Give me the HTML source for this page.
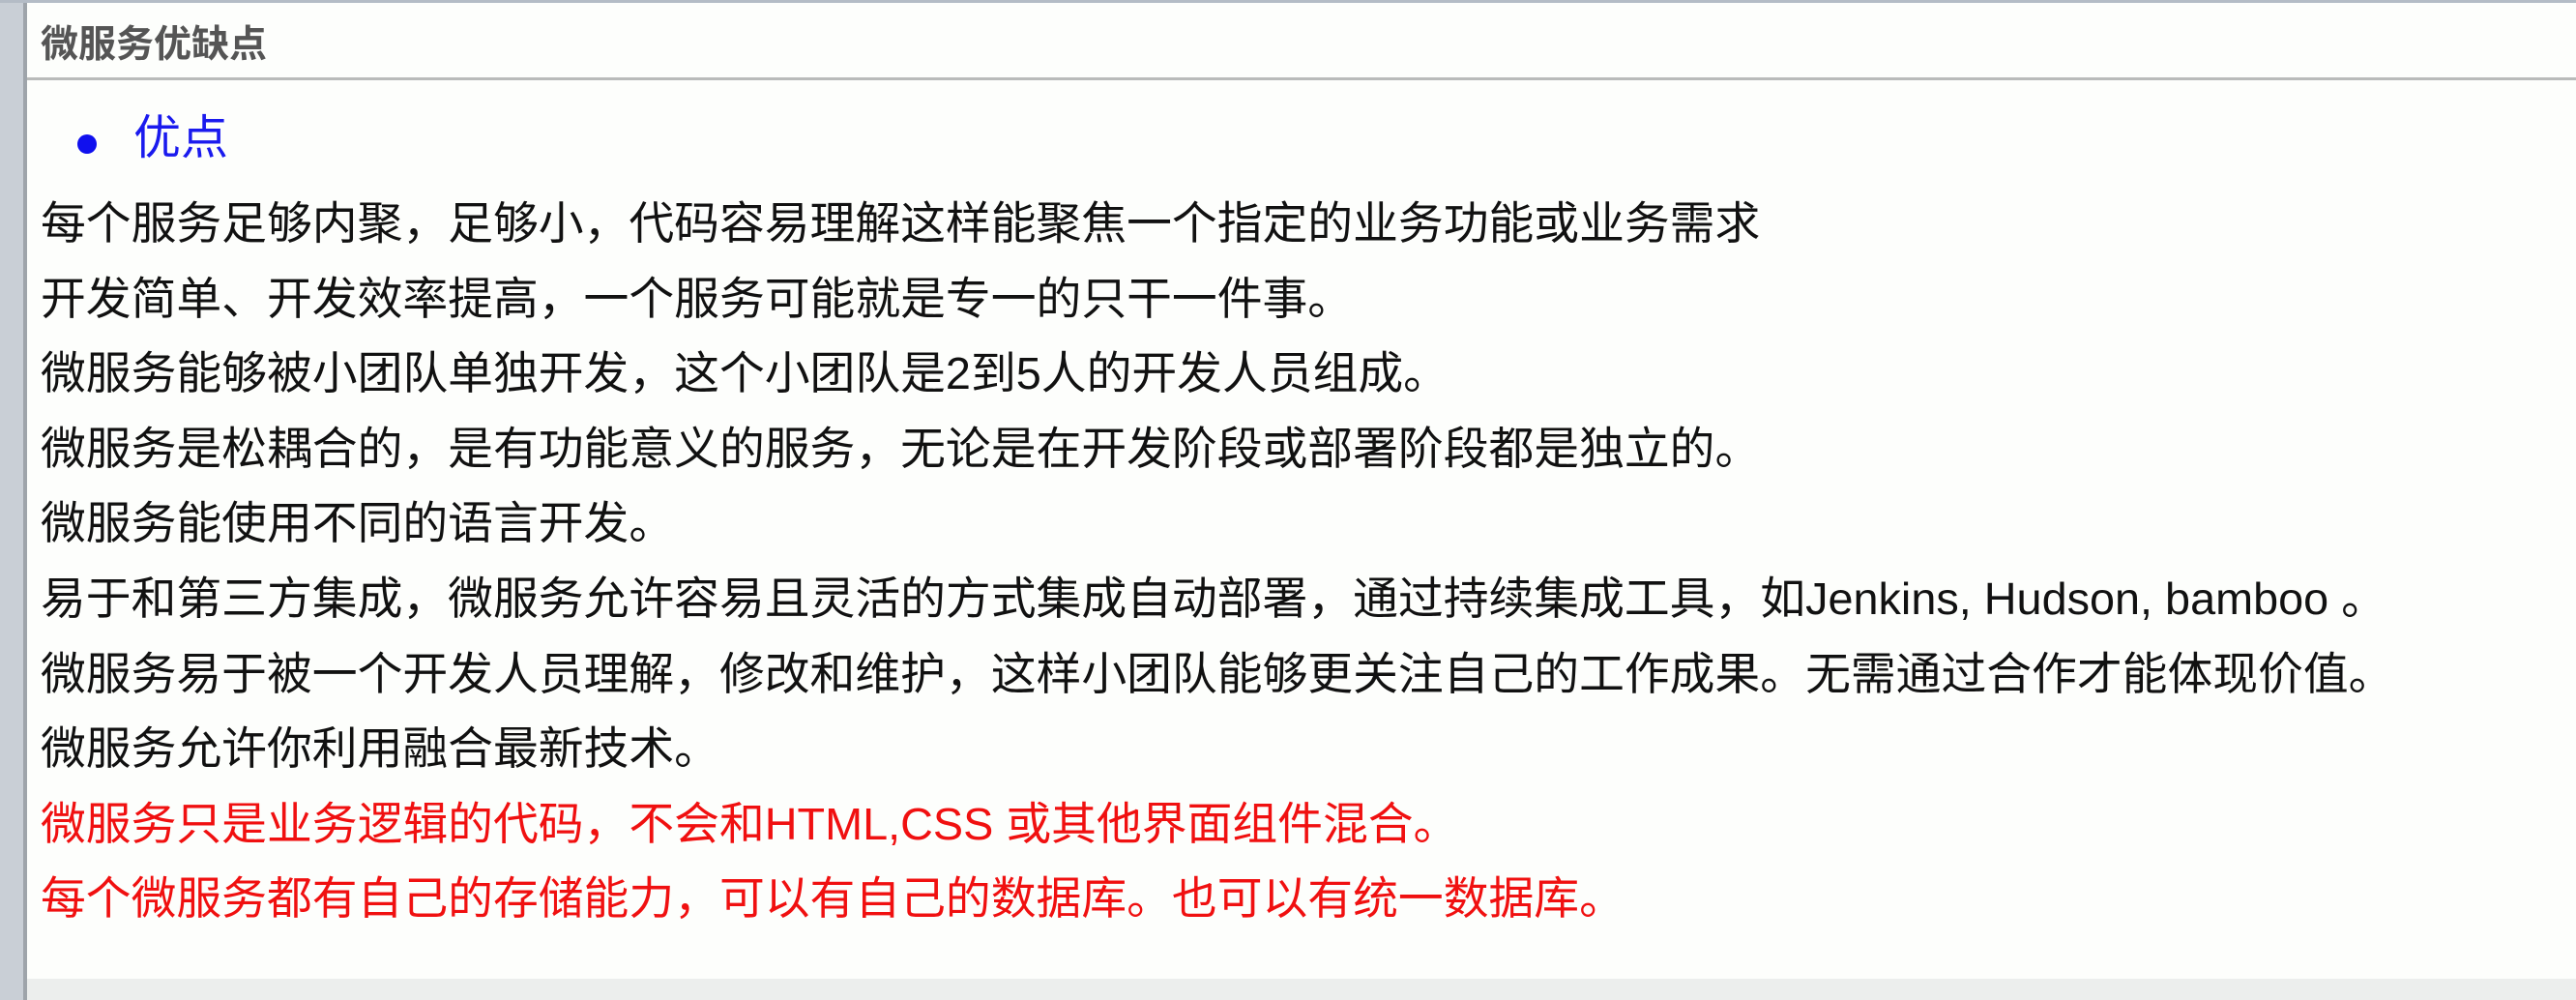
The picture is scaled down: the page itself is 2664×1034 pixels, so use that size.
<!DOCTYPE html>
<html><head><meta charset="utf-8"><style>
html,body{margin:0;padding:0;}
body{width:2664px;height:1034px;position:relative;overflow:hidden;background:#fdfefc;font-family:"Liberation Sans","Noto Sans CJK SC",sans-serif;}
.lb{position:absolute;left:0;top:0;width:24px;height:1034px;background:#c9cfd6;}
.lb2{position:absolute;left:24px;top:0;width:4px;height:1034px;background:#9ea4aa;}
.tb{position:absolute;left:0;top:0;width:2664px;height:3px;background:#b4bcc6;}
.hl{position:absolute;left:28px;top:80px;width:2636px;height:3px;background:#b9bbba;}
.bot{position:absolute;left:28px;top:1012px;width:2636px;height:22px;background:#eceeed;}
.h{position:absolute;left:42px;top:22px;font-size:39px;font-weight:bold;color:#555;line-height:50px;}
.t{position:absolute;left:42px;font-size:46.8px;line-height:68px;color:#111;white-space:nowrap;}
.r{color:#f01010;}
.dot{position:absolute;left:80px;top:139px;width:20px;height:20px;border-radius:50%;background:#1010ee;}
.b{position:absolute;left:138px;top:111px;font-size:49px;line-height:64px;color:#1a1aee;}
</style></head><body>
<div class="lb"></div><div class="lb2"></div><div class="tb"></div>
<div class="h">微服务优缺点</div>
<div class="hl"></div>
<div class="dot"></div><div class="b">优点</div>
<div class="t" style="top:197px">每个服务足够内聚，足够小，代码容易理解这样能聚焦一个指定的业务功能或业务需求</div>
<div class="t" style="top:275px">开发简单、开发效率提高，一个服务可能就是专一的只干一件事。</div>
<div class="t" style="top:352px">微服务能够被小团队单独开发，这个小团队是2到5人的开发人员组成。</div>
<div class="t" style="top:430px">微服务是松耦合的，是有功能意义的服务，无论是在开发阶段或部署阶段都是独立的。</div>
<div class="t" style="top:507px">微服务能使用不同的语言开发。</div>
<div class="t" style="top:585px">易于和第三方集成，微服务允许容易且灵活的方式集成自动部署，通过持续集成工具，如Jenkins, Hudson, bamboo 。</div>
<div class="t" style="top:663px">微服务易于被一个开发人员理解，修改和维护，这样小团队能够更关注自己的工作成果。无需通过合作才能体现价值。</div>
<div class="t" style="top:740px">微服务允许你利用融合最新技术。</div>
<div class="t r" style="top:818px">微服务只是业务逻辑的代码，不会和HTML,CSS 或其他界面组件混合。</div>
<div class="t r" style="top:895px">每个微服务都有自己的存储能力，可以有自己的数据库。也可以有统一数据库。</div>
<div class="bot"></div>
</body></html>
